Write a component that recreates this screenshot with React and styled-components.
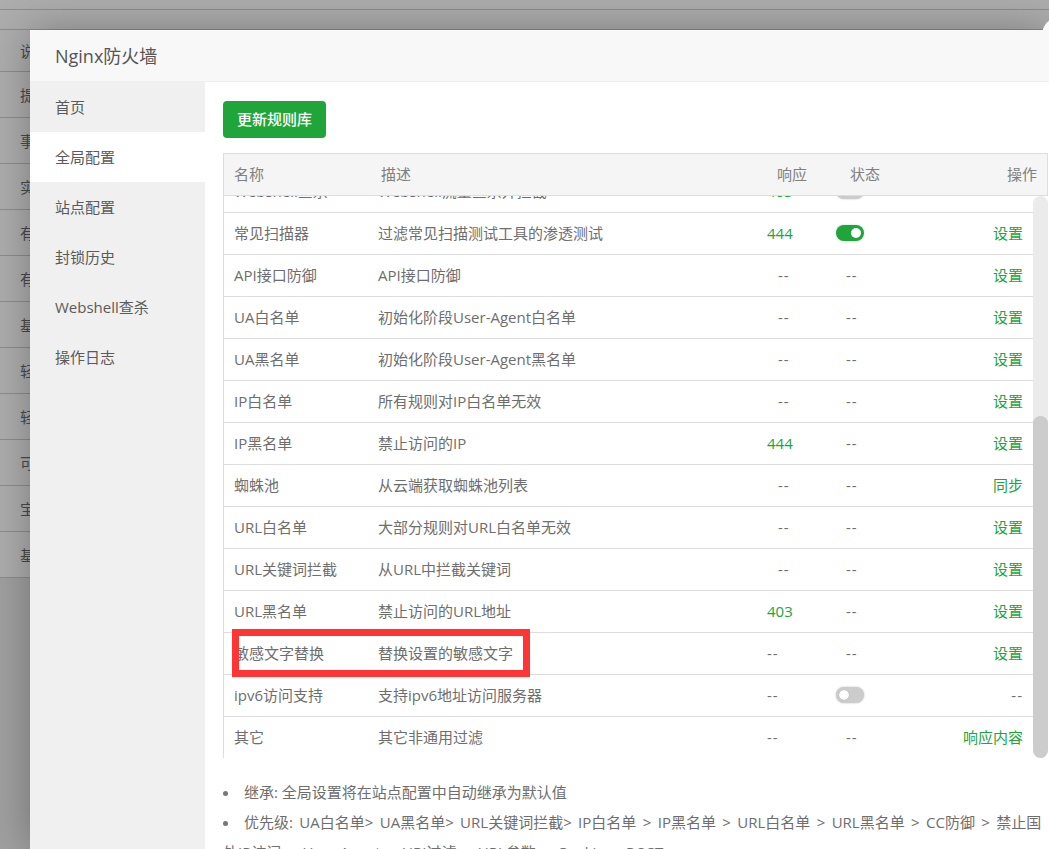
import React, { useLayoutEffect, useRef } from 'react'
import styled, { createGlobalStyle } from 'styled-components'

const GlobalStyle = createGlobalStyle`
  html, body { margin: 0; padding: 0; height: 100%; overflow: hidden; }
  body {
    font-family: "Open Sans", "Noto Sans CJK SC", sans-serif;
    font-size: 15px;
    color: #6e6e6e;
  }
`

const Page = styled.div`
  height: 849px;
  overflow: hidden;
  position: relative;
  background: #a0a0a0;
`

const TopBar = styled.div`
  height: ${p => p.$h}px;
  background: #adadad;
  border-bottom: 1px solid #8c8c8c;
`

const BackRow = styled.div`
  height: ${p => p.$h || 45}px;
  background: #adadad;
  border-bottom: 1px solid #8c8c8c;
  display: flex;
  align-items: center;
  padding-left: 20px;
  color: #4a4a4a;
`

const Modal = styled.div`
  position: absolute;
  left: 30px;
  top: 30px;
  width: 1019px;
  height: 819px;
  background: #fff;
  box-shadow: 0 0 40px rgba(0, 0, 0, 0.3);
  display: flex;
  flex-direction: column;

  &::after {
    content: '';
    position: absolute;
    left: 1012px;
    top: -13px;
    width: 36px;
    height: 36px;
    border-radius: 50%;
    background: #f8f8f8;
  }
`

const Title = styled.div`
  height: 52px;
  flex: none;
  box-sizing: border-box;
  padding: 0 0 2px 25px;
  display: flex;
  align-items: center;
  background: #f8f8f8;
  border-bottom: 1px solid #eee;
  font-size: 18px;
  color: #555;
`

const Main = styled.div`
  flex: 1;
  display: flex;
  min-height: 0;
`

const Sidebar = styled.div`
  width: 175px;
  flex: none;
  background: #f0f0f0;
`

const NavItem = styled.div`
  height: 50px;
  box-sizing: border-box;
  padding: 0 0 2px 25px;
  display: flex;
  align-items: center;
  color: #5a5a5a;
  background: ${p => (p.$active ? '#fff' : 'transparent')};
`

const Content = styled.div`
  flex: 1;
  min-width: 0;
  padding: 19px 1px 0 18px;
`

const UpdateButton = styled.button`
  display: block;
  width: 103px;
  height: 37px;
  padding: 0 0 2px;
  border: 0;
  border-radius: 4px;
  background: #20a53a;
  color: #fff;
  font: inherit;
  font-weight: 500;
`

const TableWrap = styled.div`
  position: relative;
  margin-top: 15px;
`

const HeadRow = styled.div`
  height: 43px;
  box-sizing: border-box;
  display: grid;
  grid-template-columns: 147px 396px 73px 1fr auto;
  align-items: center;
  padding: 0 10px 2px;
  background: #f5f5f5;
  border: 1px solid #ddd;
  color: #808080;
`

const Scroller = styled.div`
  height: 562px;
  overflow-y: scroll;
  scrollbar-width: none;
  border-left: 1px solid #ddd;
`

// scrollbars are not painted in the capture, so the bar is drawn by hand
const ScrollTrack = styled.div`
  position: absolute;
  right: 0;
  top: 43px;
  width: 15px;
  height: 562px;
  border-radius: 8px;
  background: #ebebeb;
`

const ScrollThumb = styled.div`
  position: absolute;
  left: 0;
  right: 0;
  bottom: 0;
  height: 342px;
  border-radius: 8px;
  background: #ccc;
`

const Row = styled.div`
  height: 42px;
  box-sizing: border-box;
  display: grid;
  grid-template-columns: 144px 389px 69px 1fr auto;
  align-items: center;
  padding: 0 25px 2px 10px;
  border-bottom: 1px solid #ddd;

  &:last-child {
    height: 41px;
    border-bottom: 0;
  }
`

const Name = styled.div`
  white-space: nowrap;
`

const Desc = styled.div`
  white-space: nowrap;
`

const Green = styled.span`
  color: #20a53a;
`

const Dash = styled.span`
  padding-left: ${p => p.$indent || 0}px;
  letter-spacing: 1px;
`

const Switch = styled.span`
  position: relative;
  display: block;
  width: 28px;
  height: 16px;
  border-radius: 8px;
  background: ${p => (p.$on ? '#20a53a' : '#ccc')};
  box-shadow: 0 0 2px ${p => (p.$on ? 'rgba(32, 165, 58, 0.4)' : '#bbb')};

  &::after {
    content: '';
    position: absolute;
    top: 3px;
    left: ${p => (p.$on ? '15px' : '3px')};
    width: 10px;
    height: 10px;
    border-radius: 50%;
    background: #fff;
    box-shadow: 0 0 1px ${p => (p.$on ? 'transparent' : '#888')};
  }
`

const Highlight = styled.div`
  position: absolute;
  left: 9px;
  top: 476px;
  width: 298px;
  height: 48px;
  box-sizing: border-box;
  border: 7px solid #ff3535;
  pointer-events: none;
`

const Notes = styled.ul`
  list-style: none;
  margin: 19px 0 0;
  padding: 0 6px 0 0;
`

const Note = styled.li`
  line-height: 30px;
  word-spacing: ${p => (p.$wide ? '2.5px' : '0')};

  &::before {
    content: '';
    display: inline-block;
    width: 5px;
    height: 5px;
    margin: 0 16px 2px 0;
    border-radius: 50%;
    background: #777;
  }
`

const backRows = ['说', '提', '事', '实', '有', '有', '基', '轻', '轻', '可', '宝', '基']

const menu = ['首页', '全局配置', '站点配置', '封锁历史', 'Webshell查杀', '操作日志']

const rules = [
  { name: 'CC防御', desc: '防御CC攻击,具体防御参数请到站点配置中调整', code: '444', on: true },
  { name: '增强模式', desc: '启用后将对所有访问进行人机验证', code: '444', on: false },
  { name: 'GET-URI过滤', desc: '过滤URI中的恶意请求', code: '403', on: true },
  { name: 'GET-参数过滤', desc: '过滤GET参数中的恶意内容', code: '403', on: true },
  { name: 'POST过滤', desc: '过滤POST参数中的恶意内容', code: '403', on: true },
  { name: 'User-Agent过滤', desc: '过滤恶意User-Agent', code: '403', on: true },
  { name: 'Cookie过滤', desc: '过滤Cookie中的恶意内容', code: '403', on: true },
  { name: '禁止国外访问', desc: '禁止中国大陆以外的地区访问站点', code: '444', on: false },
  { name: 'Webshell查杀', desc: 'Webshell流量查杀并拦截', code: '403', on: false, action: null },
  { name: '常见扫描器', desc: '过滤常见扫描测试工具的渗透测试', code: '444', on: true },
  { name: 'API接口防御', desc: 'API接口防御' },
  { name: 'UA白名单', desc: '初始化阶段User-Agent白名单' },
  { name: 'UA黑名单', desc: '初始化阶段User-Agent黑名单' },
  { name: 'IP白名单', desc: '所有规则对IP白名单无效' },
  { name: 'IP黑名单', desc: '禁止访问的IP', code: '444' },
  { name: '蜘蛛池', desc: '从云端获取蜘蛛池列表', action: '同步' },
  { name: 'URL白名单', desc: '大部分规则对URL白名单无效' },
  { name: 'URL关键词拦截', desc: '从URL中拦截关键词' },
  { name: 'URL黑名单', desc: '禁止访问的URL地址', code: '403' },
  { name: '敏感文字替换', desc: '替换设置的敏感文字', low: true },
  { name: 'ipv6访问支持', desc: '支持ipv6地址访问服务器', low: true, on: false, action: null },
  { name: '其它', desc: '其它非通用过滤', low: true, action: '响应内容' },
]

function RuleRow({ rule }) {
  return (
    <Row>
      <Name>{rule.name}</Name>
      <Desc>{rule.desc}</Desc>
      {rule.code ? <Green>{rule.code}</Green> : <Dash $indent={rule.low ? 0 : 11}>--</Dash>}
      {rule.on === undefined ? <Dash $indent={10}>--</Dash> : <Switch $on={rule.on} />}
      {rule.action === null ? <Dash>--</Dash> : <Green>{rule.action || '设置'}</Green>}
    </Row>
  )
}

export default function App() {
  const scroller = useRef(null)

  useLayoutEffect(() => {
    scroller.current.scrollTop = scroller.current.scrollHeight
  }, [])

  return (
    <Page>
      <GlobalStyle />
      <TopBar $h={9} />
      <TopBar $h={19} />
      {backRows.map((text, i) => (
        <BackRow key={i} $h={i === 0 ? 41 : 45}>{text}</BackRow>
      ))}

      <Modal>
        <Title>Nginx防火墙</Title>
        <Main>
          <Sidebar>
            {menu.map(item => (
              <NavItem key={item} $active={item === '全局配置'}>{item}</NavItem>
            ))}
          </Sidebar>
          <Content>
            <UpdateButton>更新规则库</UpdateButton>
            <TableWrap>
              <HeadRow>
                <span>名称</span>
                <span>描述</span>
                <span>响应</span>
                <span>状态</span>
                <span>操作</span>
              </HeadRow>
              <Scroller ref={scroller}>
                {rules.map(rule => <RuleRow key={rule.name} rule={rule} />)}
              </Scroller>
              <ScrollTrack>
                <ScrollThumb />
              </ScrollTrack>
              <Highlight />
            </TableWrap>
            <Notes>
              <Note>继承: 全局设置将在站点配置中自动继承为默认值</Note>
              <Note $wide>优先级: UA白名单&gt; UA黑名单&gt; URL关键词拦截&gt; IP白名单 &gt; IP黑名单 &gt; URL白名单 &gt; URL黑名单 &gt; CC防御 &gt; 禁止国外IP访问 &gt; User-Agent &gt; URI过滤 &gt; URL参数 &gt; Cookie &gt; POST</Note>
            </Notes>
          </Content>
        </Main>
      </Modal>
    </Page>
  )
}
